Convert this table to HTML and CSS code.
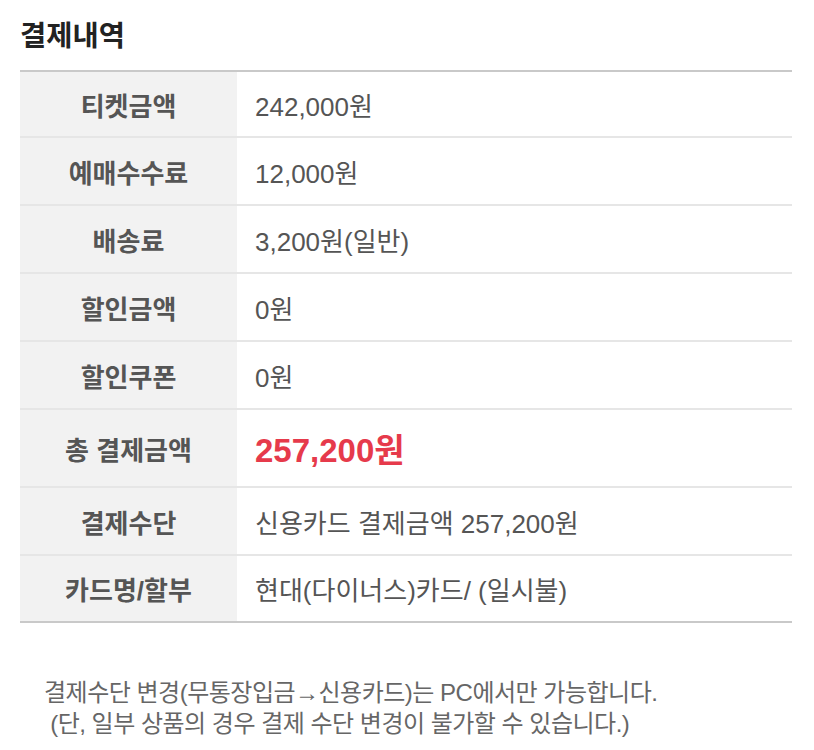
FILE: index.html
```html
<!DOCTYPE html>
<html lang="ko">
<head>
<meta charset="utf-8">
<link rel="stylesheet" href="styles.css">
</head>
<body>
<div class="page">
  <h2 class="title">결제내역</h2>
  <div class="table">
    <div class="row row-first"><div class="label">티켓금액</div><div class="value">242,000원</div></div>
    <div class="row"><div class="label">예매수수료</div><div class="value">12,000원</div></div>
    <div class="row"><div class="label">배송료</div><div class="value">3,200원(일반)</div></div>
    <div class="row"><div class="label">할인금액</div><div class="value">0원</div></div>
    <div class="row"><div class="label">할인쿠폰</div><div class="value">0원</div></div>
    <div class="row row-total"><div class="label">총 결제금액</div><div class="value total">257,200원</div></div>
    <div class="row"><div class="label">결제수단</div><div class="value">신용카드 결제금액 257,200원</div></div>
    <div class="row"><div class="label">카드명/할부</div><div class="value">현대(다이너스)카드/ (일시불)</div></div>
  </div>
  <p class="note">결제수단 변경(무통장입금→신용카드)는 PC에서만 가능합니다.<br>&nbsp;(단, 일부 상품의 경우 결제 수단 변경이 불가할 수 있습니다.)</p>
</div>
</body>
</html>
```

FILE: styles.css
```css
* { box-sizing: border-box; }
body {
  margin: 0;
  background: #fff;
  font-family: "Liberation Sans", "Noto Sans CJK KR", sans-serif;
  color: #555;
}
.page {
  width: 772px;
  margin-left: 20px;
}
.title {
  margin: 0;
  height: 70px;
  padding-top: 16px;
  font-size: 28.5px;
  line-height: 40px;
  font-weight: 700;
  color: #222;
}
.table {
  border-top: 2px solid #c9c9c9;
  border-bottom: 2px solid #c9c9c9;
}
.row {
  display: flex;
  height: 68px;
  border-bottom: 2px solid #e6e6e6;
}
.row-first { height: 66px; }
.row:last-child {
  border-bottom: none;
  height: 65px;
}
.row-total { height: 78px; }
.label {
  width: 217px;
  flex: none;
  background: #f2f2f2;
  display: flex;
  align-items: center;
  justify-content: center;
  font-size: 26px;
  font-weight: 700;
  color: #555;
}
.value {
  flex: 1;
  display: flex;
  align-items: center;
  padding-left: 18px;
  font-size: 26px;
  color: #555;
}
.value.total {
  color: #e63a4b;
  font-weight: 700;
  font-size: 33px;
}
.note {
  margin: 54px 0 0 24px;
  font-size: 24px;
  line-height: 31px;
  color: #666;
  letter-spacing: -0.5px;
}
```
